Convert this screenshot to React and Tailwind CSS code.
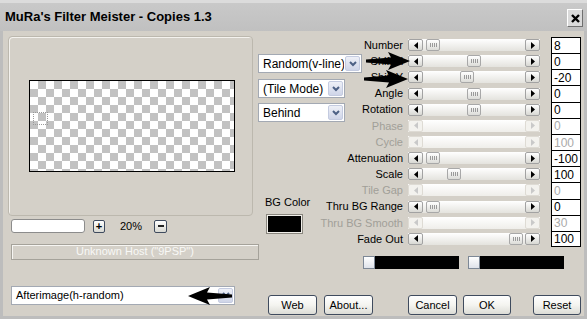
import React from 'react';

const ROWS = [
  { label: 'Number', value: '8', thumb: 3 },
  { label: 'Shift X', value: '0', thumb: 44 },
  { label: 'Shift Y', value: '-20', thumb: 37 },
  { label: 'Angle', value: '0', thumb: 44 },
  { label: 'Rotation', value: '0', thumb: 44 },
  { label: 'Phase', value: '0', off: true },
  { label: 'Cycle', value: '100', off: true },
  { label: 'Attenuation', value: '-100', thumb: 3 },
  { label: 'Scale', value: '100', thumb: 24 },
  { label: 'Tile Gap', value: '0', off: true },
  { label: 'Thru BG Range', value: '0', thumb: 3 },
  { label: 'Thru BG Smooth', value: '30', off: true },
  { label: 'Fade Out', value: '100', thumb: 86 },
];

function BigArrow({ left }) {
  return (
    <svg width="44" height="18" viewBox="0 0 44 18" className={left ? '-scale-x-100' : ''}>
      <polygon points="0,7.5 25,5.5 22,0 44,9 22,18 25,12.5 0,10.5" fill="#000" />
    </svg>
  );
}

function ArrowBtn({ dir, off }) {
  return (
    <div
      className={
        off
          ? 'w-[15px] h-full flex items-center justify-center rounded-[2px] border border-[#dedbd4] bg-[#f3f2ee]'
          : 'w-[15px] h-full flex items-center justify-center rounded-[2px] border border-[#a2a2a2] bg-linear-to-b from-white to-[#d8d8d3]'
      }
    >
      <svg width="4" height="7" viewBox="0 0 4 7">
        <polygon points={dir === 'left' ? '4,0 0,3.5 4,7' : '0,0 4,3.5 0,7'} fill={off ? '#c9c9c9' : '#000'} />
      </svg>
    </div>
  );
}

function Thumb() {
  return (
    <div className="w-[14px] h-full flex items-center justify-center gap-px rounded-[2px] border border-[#a8a8a8] bg-linear-to-b from-white to-[#dcdcd8]">
      <span className="w-px h-[4px] bg-[#9a9a9a]" />
      <span className="w-px h-[4px] bg-[#9a9a9a]" />
      <span className="w-px h-[4px] bg-[#9a9a9a]" />
      <span className="w-px h-[4px] bg-[#9a9a9a]" />
    </div>
  );
}

function ScrollBar({ thumb, off }) {
  return (
    <div
      className={
        off
          ? 'w-[132px] h-[12px] flex bg-linear-to-b from-white to-[#efeeea]'
          : 'w-[132px] h-[12px] flex bg-linear-to-b from-white to-[#e4e3de]'
      }
    >
      <ArrowBtn dir="left" off={off} />
      <div className="flex-1 flex">
        {!off && (
          <>
            <div style={{ width: thumb }} />
            <Thumb />
          </>
        )}
      </div>
      <ArrowBtn dir="right" off={off} />
    </div>
  );
}

function Chevron() {
  return (
    <svg width="8" height="6" viewBox="0 0 8 6">
      <polyline points="1,1 4,4 7,1" fill="none" stroke="#4d6185" strokeWidth="2" />
    </svg>
  );
}

function Dropdown({ text, w, className = '' }) {
  return (
    <div className={`h-[19px] flex items-stretch border border-[#a3a9b3] bg-white ${w} ${className}`}>
      <span className="flex-1 pl-[4px] flex items-center text-[12px] whitespace-nowrap overflow-hidden">{text}</span>
      <div className="w-[15px] m-px flex items-center justify-center rounded-[2px] border border-[#c4cbe0] bg-linear-to-b from-[#eef0f7] to-[#cfd5e8]">
        <Chevron />
      </div>
    </div>
  );
}

function XpButton({ children, w }) {
  return (
    <button className={`h-[20px] ${w} rounded-[3px] border border-[#3f4b5e] bg-linear-to-b from-white via-[#f4f4f0] to-[#dcdcd6] text-[11px] leading-none`}>
      {children}
    </button>
  );
}

export default function App() {
  return (
    <div className="w-[587px] h-[319px] flex flex-col bg-[#bdbdbd] overflow-hidden text-[11px] text-black font-['Liberation_Sans',Arial,sans-serif]">
      {/* Title bar */}
      <div className="h-[31px] shrink-0 flex items-center justify-between pl-[5px] pr-[4px] border-t-[3px] border-[#dcdcdc] bg-linear-to-b from-[#c9c9c9] to-[#c0c0c0]">
        <span className="text-[13px] font-bold">MuRa's Filter Meister - Copies 1.3</span>
        <div className="mt-[2px] w-[16px] h-[18px] flex items-center justify-center bg-[#dadada] border border-t-white border-l-white border-r-[#707070] border-b-[#707070]">
          <svg width="9" height="9" viewBox="0 0 9 9">
            <path d="M1 1L8 8M8 1L1 8" stroke="#000" strokeWidth="2.4" />
          </svg>
        </div>
      </div>

      {/* Body */}
      <div className="flex-1 flex mx-[3px] mb-[3px] pl-[5px] pt-[5px] bg-[#d4d0c8]">
        {/* Left column */}
        <div className="w-[250px] shrink-0 flex flex-col">
          <div className="w-[245px] h-[180px] pt-[43px] pl-[20px] rounded-[4px] border border-[#bcb8ae] shadow-[inset_1px_1px_0_#f4f2ee]">
            <div className="relative w-[206px] h-[92px] border border-black bg-[repeating-conic-gradient(#c2c2c2_0_25%,#ffffff_0_50%)] bg-[length:16px_16px]">
              <div className="absolute left-[3px] top-[31px] w-[15px] h-[13px] border border-dotted border-[#9a9a9a]" />
            </div>
          </div>

          <div className="mt-[2px] ml-[3px] flex items-center">
            <div className="w-[74px] h-[14px] rounded-[3px] border border-[#8c8c8c] bg-white" />
            <div className="ml-[8px] w-[12px] h-[13px] flex items-center justify-center rounded-[2px] border border-[#3f4b5e] bg-linear-to-b from-white to-[#d8d8d2] text-[11px] leading-none font-bold">+</div>
            <span className="ml-[15px] w-[22px]">20%</span>
            <div className="ml-[12px] w-[13px] h-[13px] flex items-center justify-center rounded-[2px] border border-[#3f4b5e] bg-linear-to-b from-white to-[#d8d8d2]">
              <span className="w-[6px] h-[2px] bg-[#222]" />
            </div>
          </div>

          <div className="mt-[9px] ml-[3px] w-[248px] h-[16px] shrink-0 flex items-center justify-center border border-[#a5a29a] shadow-[inset_1px_1px_0_#f6f5f2] text-[#f8f8f6] whitespace-nowrap">
            Unknown Host ("9PSP")
          </div>

          <div className="relative mt-[26px] ml-[3px] w-[224px] h-[19px] flex items-stretch border border-[#a3a9b3] bg-white">
            <span className="flex-1 pl-[4px] flex items-center text-[11px]">Afterimage(h-random)</span>
            <div className="w-[15px] m-px flex items-center justify-center rounded-[2px] border border-[#c4cbe0] bg-linear-to-b from-[#eef0f7] to-[#cfd5e8]">
              <Chevron />
            </div>
            <div className="absolute left-[176px] top-0">
              <BigArrow left />
            </div>
          </div>
        </div>

        {/* Right section */}
        <div className="flex-1 flex flex-col">
          <div className="flex">
            {/* Mode column */}
            <div className="w-[65px] shrink-0 flex flex-col pt-[18px]">
              <Dropdown text="Random(v-line)" w="w-[104px]" />
              <Dropdown text="(Tile Mode)" w="w-[87px]" className="mt-[6px]" />
              <Dropdown text="Behind" w="w-[87px]" className="mt-[5px]" />
              <div className="mt-[72px] ml-[7px] w-[40px] whitespace-nowrap text-center">BG Color</div>
              <div className="mt-[4px] ml-[9px] w-[35px] h-[18px] bg-black border border-[#f0eee9] outline outline-[#8a877f]" />
            </div>

            {/* Slider rows */}
            <div className="relative flex-1 flex flex-col pt-px">
              {ROWS.map((r, i) => (
                <div key={r.label} className="h-[16.17px] flex items-center">
                  <div className={r.off ? 'w-[80px] flex justify-end whitespace-nowrap text-[#a19f98]' : 'w-[80px] flex justify-end whitespace-nowrap'}>
                    {r.label}
                  </div>
                  <div className="ml-[5px]">
                    <ScrollBar thumb={r.thumb} off={r.off} />
                  </div>
                  <div
                    className={
                      (i === ROWS.length - 1 ? 'border-b ' : '') +
                      (r.off ? 'text-[#a9a9a9] ' : '') +
                      'ml-[11px] w-[30px] h-full bg-white border-x border-t border-black pl-[2px] flex items-center leading-none text-[12px]'
                    }
                  >
                    {r.value}
                  </div>
                </div>
              ))}
              <div className="absolute left-[43px] top-[16px]">
                <BigArrow />
              </div>
              <div className="absolute left-[41px] top-[34px]">
                <BigArrow />
              </div>
            </div>
          </div>

          {/* Colour bars */}
          <div className="mt-[9px] ml-[105px] flex gap-[9px]">
            <div className="w-[96px] h-[13px] bg-black flex">
              <div className="w-[12px] h-full border border-[#7d8896] bg-linear-to-b from-white to-[#dfe3ea]" />
            </div>
            <div className="w-[96px] h-[13px] bg-black flex">
              <div className="w-[12px] h-full border border-[#7d8896] bg-linear-to-b from-white to-[#dfe3ea]" />
            </div>
          </div>

          {/* Buttons */}
          <div className="mt-[26px] ml-[10px] flex">
            <XpButton w="w-[49px]">Web</XpButton>
            <div className="ml-[7px]">
              <XpButton w="w-[49px]">About...</XpButton>
            </div>
            <div className="ml-[35px]">
              <XpButton w="w-[49px]">Cancel</XpButton>
            </div>
            <div className="ml-[6px]">
              <XpButton w="w-[48px]">OK</XpButton>
            </div>
            <div className="ml-[22px]">
              <XpButton w="w-[48px]">Reset</XpButton>
            </div>
          </div>
        </div>
      </div>
    </div>
  );
}
